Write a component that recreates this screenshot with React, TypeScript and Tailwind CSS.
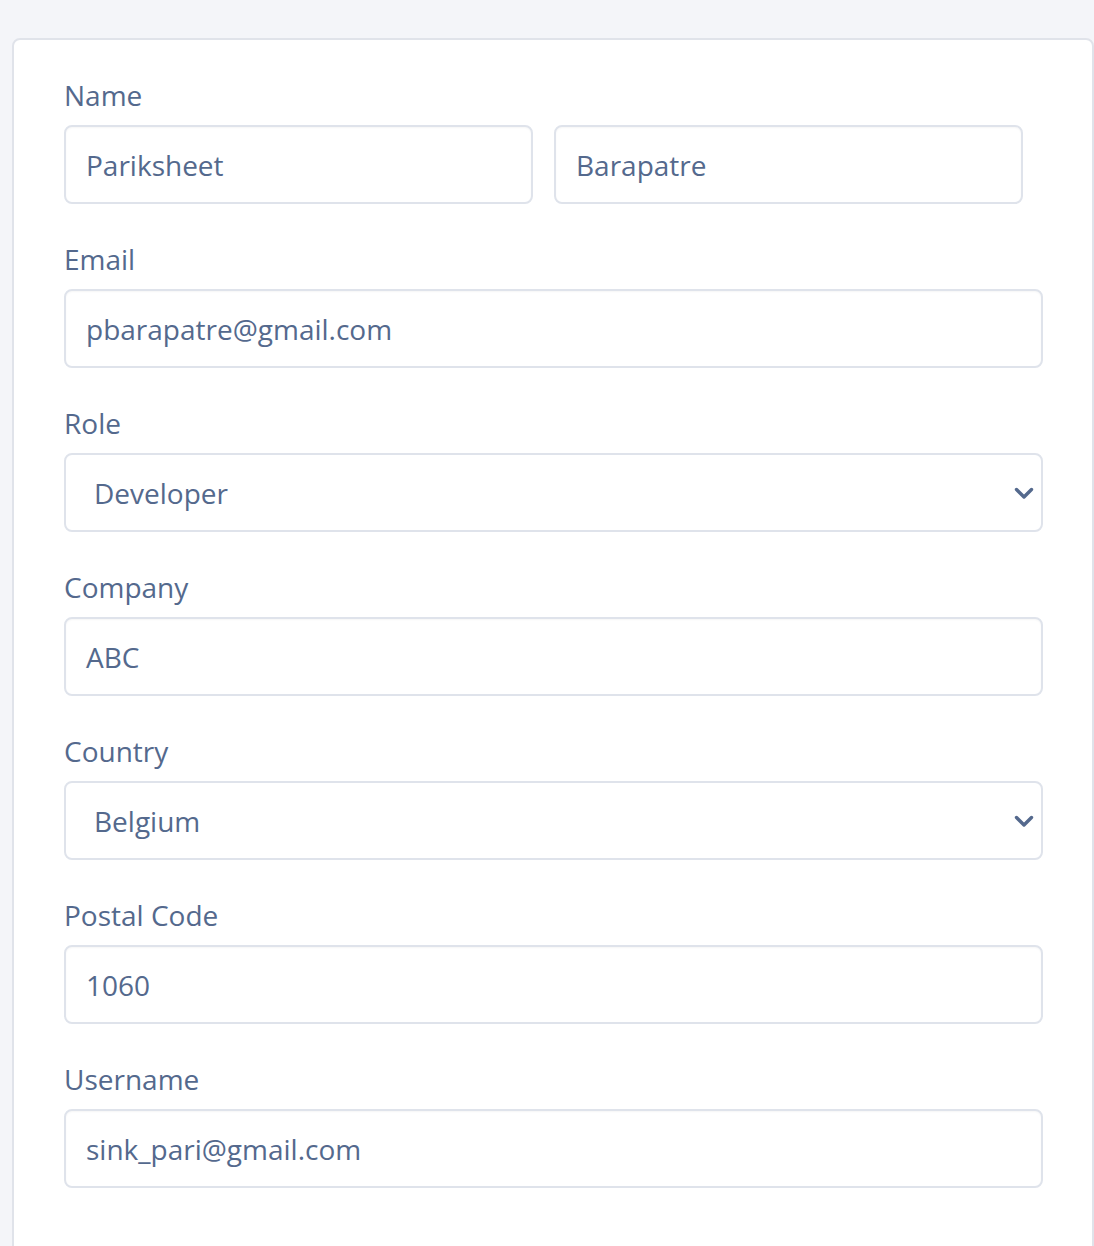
const font = { fontFamily: '"Open Sans", "Liberation Sans", sans-serif' };

function Label({ children }: { children: string }) {
  return (
    <div className="h-10 leading-10 text-[28px] text-[#54698d]">{children}</div>
  );
}

function TextInput({ value, className = "w-full" }: { value: string; className?: string }) {
  return (
    <div
      className={`h-[79px] flex items-center px-[20px] bg-white border-2 border-[#dfe3eb] rounded-[8px] text-[28px] text-[#54698d] shadow-[inset_0_1px_2px_rgba(0,0,0,0.04)] ${className}`}
    >
      {value}
    </div>
  );
}

function Select({ value }: { value: string }) {
  return (
    <div className="h-[79px] w-full flex items-center justify-between pl-[28px] pr-[7px] bg-white border-2 border-[#dfe3eb] rounded-[8px] text-[28px] text-[#54698d]">
      <span>{value}</span>
      <svg className="w-[20px] h-[14px]" viewBox="0 0 20 14" fill="none">
        <path
          d="M2.5 3.5l7.5 7.5 7.5-7.5"
          stroke="#54698d"
          strokeWidth={3.4}
          strokeLinecap="round"
          strokeLinejoin="round"
        />
      </svg>
    </div>
  );
}

function Field({ label, children }: { label: string; children: React.ReactNode }) {
  return (
    <div className="flex flex-col">
      <Label>{label}</Label>
      <div className="mt-[10px]">{children}</div>
    </div>
  );
}

export default function App() {
  return (
    <div className="min-h-[1246px] bg-[#f4f5f9] pt-[38px] pl-[12px] overflow-hidden" style={font}>
      <div className="w-[1082px] min-h-[1220px] bg-white border-2 border-[#e0e3ea] rounded-[8px] pt-[35px] pl-[50px] pr-[48px] pb-12">
        <div className="flex flex-col gap-[35px] w-[979px]">
          <Field label="Name">
            <div className="flex gap-[21px]">
              <TextInput value="Pariksheet" className="w-[469px]" />
              <TextInput value="Barapatre" className="w-[469px]" />
            </div>
          </Field>
          <Field label="Email">
            <TextInput value="pbarapatre@gmail.com" />
          </Field>
          <Field label="Role">
            <Select value="Developer" />
          </Field>
          <Field label="Company">
            <TextInput value="ABC" />
          </Field>
          <Field label="Country">
            <Select value="Belgium" />
          </Field>
          <Field label="Postal Code">
            <TextInput value="1060" />
          </Field>
          <Field label="Username">
            <TextInput value="sink_pari@gmail.com" />
          </Field>
        </div>
      </div>
    </div>
  );
}
